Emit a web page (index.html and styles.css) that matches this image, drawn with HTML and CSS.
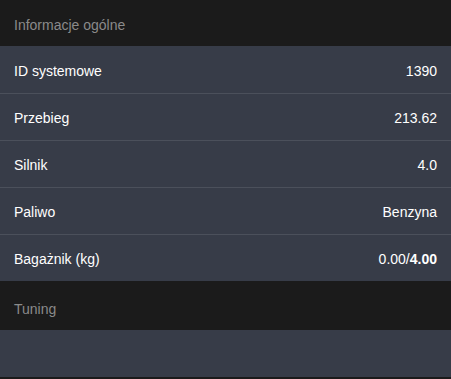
FILE: index.html
```html
<!DOCTYPE html>
<html lang="pl">
<head>
  <meta charset="UTF-8">
  <meta name="viewport" content="width=device-width, initial-scale=1.0">
  <title>Informacje</title>
  <link rel="stylesheet" href="styles.css">
</head>
<body>
  <div class="panel">
    <h3 class="section-title">Informacje ogólne</h3>
    <ul class="info-list">
      <li class="info-row"><span>ID systemowe</span><span>1390</span></li>
      <li class="info-row"><span>Przebieg</span><span>213.62</span></li>
      <li class="info-row"><span>Silnik</span><span>4.0</span></li>
      <li class="info-row"><span>Paliwo</span><span>Benzyna</span></li>
      <li class="info-row"><span>Bagażnik (kg)</span><span>0.00/<b>4.00</b></span></li>
    </ul>

    <h3 class="section-title tuning">Tuning</h3>
    <div class="tuning-body"></div>
  </div>
</body>
</html>
```

FILE: styles.css
```css
body {
  margin: 0;
  background: #1b1b1b;
  font-family: "Liberation Sans", Arial, sans-serif;
  font-size: 14px;
}

.panel {
  width: 100%;
}

.section-title {
  margin: 0;
  height: 42px;
  line-height: 42px;
  padding: 4px 14px 0;
  background: #1b1b1b;
  color: #8a8a8a;
  font-size: 14px;
  font-weight: normal;
}

.section-title.tuning {
  margin-top: 1px;
  padding-top: 6px;
}

.info-list {
  list-style: none;
  margin: 0;
  padding: 0;
  background: #373c48;
}

.info-row {
  display: flex;
  justify-content: space-between;
  align-items: center;
  height: 44px;
  padding: 2px 14px 0;
  color: #fff;
  border-top: 1px solid #4b505b;
}

.info-row:first-child {
  border-top-color: #373c48;
}

.tuning-body {
  height: 47px;
  background: #373c48;
}
```
